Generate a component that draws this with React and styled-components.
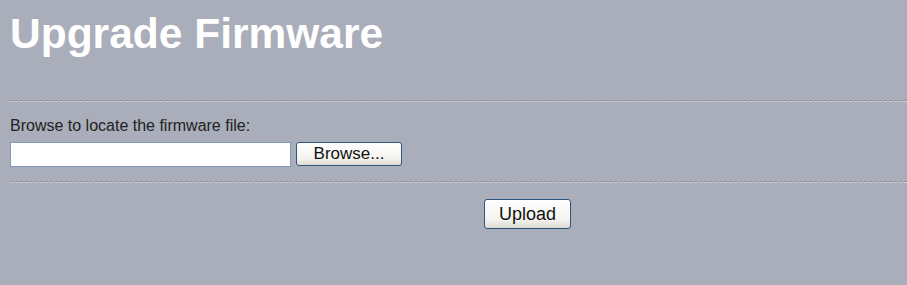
import React from "react";
import styled, { createGlobalStyle } from "styled-components";

const Global = createGlobalStyle`
  html, body {
    margin: 0;
    padding: 0;
    background: #aaaeba;
  }
  body {
    font-family: "Liberation Sans", Arial, sans-serif;
  }
`;

const Page = styled.div`
  padding: 10px 0 0 10px;
  min-height: 285px;
  box-sizing: border-box;
`;

const Title = styled.h1`
  margin: 0;
  height: 90px;
  color: #ffffff;
  font-size: 42.5px;
  font-weight: bold;
  line-height: 48px;
`;

const Divider = styled.hr`
  margin: 0;
  height: 0;
  border: 0;
  border-top: 1px dashed #8c8f98;
  border-bottom: 1px dashed #cfd1d6;
`;

const Label = styled.div`
  margin-top: 15px;
  font-size: 16px;
  line-height: 18px;
  color: #222222;
`;

const FileRow = styled.div`
  display: flex;
  align-items: flex-start;
  gap: 5px;
  margin: 7px 0 14px;
`;

const PathInput = styled.input`
  width: 281px;
  height: 25px;
  box-sizing: border-box;
  margin: 0;
  border: 1px solid #7f9db9;
  background: #ffffff;
`;

const Button = styled.button`
  box-sizing: border-box;
  height: ${(p) => p.$h}px;
  width: ${(p) => p.$w}px;
  margin: 0;
  padding: 0;
  border: 1px solid #2f5583;
  border-radius: 3px;
  background: linear-gradient(#ffffff, #f4f3ee 70%, #dcdad0);
  font-family: "Liberation Sans", Arial, sans-serif;
  font-size: ${(p) => p.$fs}px;
  color: #111;
`;

const Actions = styled.div`
  display: flex;
  padding: 16px 0 0 474px;
`;

export default function App() {
  return (
    <>
      <Global />
      <Page>
        <Title>Upgrade Firmware</Title>
        <Divider />
        <Label>Browse to locate the firmware file:</Label>
        <FileRow>
          <PathInput type="text" />
          <Button $w={106} $h={24} $fs={17}>Browse...</Button>
        </FileRow>
        <Divider />
        <Actions>
          <Button $w={87} $h={30} $fs={18}>Upload</Button>
        </Actions>
      </Page>
    </>
  );
}
